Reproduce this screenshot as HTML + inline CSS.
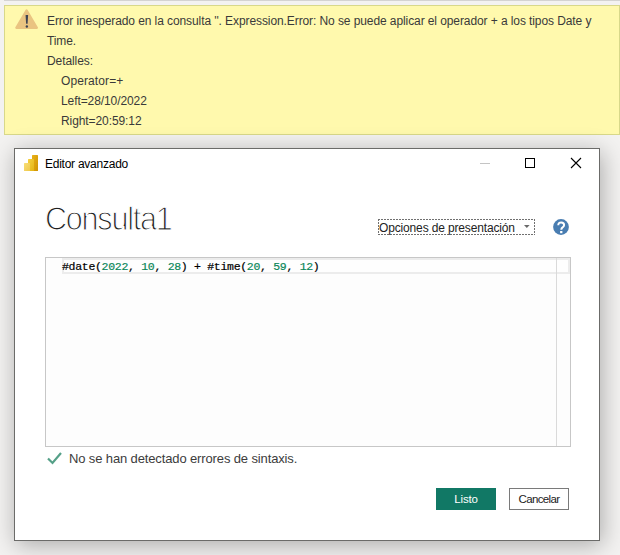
<!DOCTYPE html>
<html><head><meta charset="utf-8">
<style>
*{margin:0;padding:0;box-sizing:border-box}
html,body{width:620px;height:555px;overflow:hidden;background:#f3f2f1;font-family:"Liberation Sans",sans-serif;position:relative}
.abs{position:absolute}
.topline{left:4px;top:0;width:616px;height:1px;background:#d4d3d1}
.warn{left:4px;top:5px;width:616px;height:130px;background:#fff9ad;border:1px solid #d8d88a}
.wt{position:absolute;font-size:12px;color:#3a3a3a;white-space:nowrap;line-height:20px;letter-spacing:-0.09px}
.dlg{left:14px;top:148px;width:586px;height:393px;background:#fff;border:1px solid #6b6b69;box-shadow:2px 4px 22px rgba(0,0,0,.30)}
.t12{position:absolute;font-size:12px;white-space:nowrap;line-height:16px}
.code{position:absolute;font-family:"Liberation Mono",monospace;font-size:11.5px;letter-spacing:-0.3px;white-space:pre;line-height:16px;color:#000;-webkit-text-stroke:0.2px currentColor}
.n{color:#098658}
</style></head><body>
<div class="abs topline"></div>
<div class="abs warn"></div>
<svg class="abs" style="left:12px;top:8px" width="30" height="24" viewBox="0 0 30 24">
  <path d="M14.6 2.4 L24.9 19.8 L4.3 19.8 Z" fill="#eac481" stroke="#eac481" stroke-width="2.2" stroke-linejoin="round"/>
  <path d="M13.6 7 L16.1 7 L15.6 15.7 L14.1 15.7 Z" fill="#3d4250"/>
  <circle cx="14.85" cy="18.5" r="1.2" fill="#3d4250"/>
</svg>
<div class="wt" style="left:47px;top:11px">Error inesperado en la consulta ''. Expression.Error: No se puede aplicar el operador + a los tipos Date y</div>
<div class="wt" style="left:47px;top:31px">Time.</div>
<div class="wt" style="left:47px;top:51px">Detalles:</div>
<div class="wt" style="left:61px;top:71px;letter-spacing:0.1px">Operator=+</div>
<div class="wt" style="left:61px;top:91px">Left=28/10/2022</div>
<div class="wt" style="left:61px;top:111px">Right=20:59:12</div>

<div class="abs dlg"></div>
<!-- power bi icon -->
<svg class="abs" style="left:24px;top:155px" width="15" height="16" viewBox="0 0 15 16">
  <defs>
    <linearGradient id="g1" x1="0" y1="0" x2="1" y2="1"><stop offset="0" stop-color="#e9b21a"/><stop offset="1" stop-color="#d09300"/></linearGradient>
    <linearGradient id="g2" x1="0" y1="0" x2="1" y2="1"><stop offset="0" stop-color="#f4d03f"/><stop offset="1" stop-color="#e5b514"/></linearGradient>
    <linearGradient id="g3" x1="0" y1="0" x2="1" y2="1"><stop offset="0" stop-color="#f8de78"/><stop offset="1" stop-color="#efc94a"/></linearGradient>
  </defs>
  <rect x="8" y="0" width="6" height="16" rx="0.5" fill="url(#g1)"/>
  <rect x="4" y="4" width="6" height="12" rx="0.5" fill="url(#g2)"/>
  <rect x="0" y="8" width="6" height="8" rx="0.5" fill="url(#g3)"/>
</svg>
<div class="t12" style="left:45px;top:156px;color:#000;letter-spacing:-0.25px">Editor avanzado</div>
<!-- window buttons -->
<div class="abs" style="left:480px;top:163px;width:10px;height:1px;background:#c4c4c4"></div>
<div class="abs" style="left:525px;top:158px;width:10px;height:10px;border:1px solid #000"></div>
<svg class="abs" style="left:570px;top:157px" width="12" height="12" viewBox="0 0 12 12">
  <path d="M1 1 L11 11 M11 1 L1 11" stroke="#000" stroke-width="1.1"/>
</svg>

<div class="abs" style="left:45px;top:198px;font-size:34px;line-height:40px;color:#202020;white-space:nowrap;letter-spacing:-1.4px;-webkit-text-stroke:1.25px #fff;transform:scaleX(0.9);transform-origin:0 0">Consulta1</div>

<!-- dropdown -->
<svg class="abs" style="left:378px;top:219px" width="157" height="16" viewBox="0 0 157 16" shape-rendering="crispEdges">
  <path d="M0 0.5 H157 M0 15.5 H157" stroke="#707070" stroke-width="1" stroke-dasharray="2 1"/>
  <path d="M0.5 0 V16 M156.5 0 V16" stroke="#707070" stroke-width="1" stroke-dasharray="2 1"/>
</svg>
<div class="t12" style="left:379px;top:220px;color:#222;letter-spacing:-0.15px">Opciones de presentación</div>
<svg class="abs" style="left:524px;top:225px" width="6" height="3" viewBox="0 0 6 3"><path d="M0 0 L5.6 0 L2.8 3 Z" fill="#6a6a6a"/></svg>
<!-- help -->
<svg class="abs" style="left:552px;top:218px" width="18" height="18" viewBox="0 0 18 18">
  <circle cx="9" cy="9" r="7.9" fill="#497db1"/>
  <path d="M6.3 7.2 Q6.2 4.4 9.2 4.4 Q12.1 4.4 12.1 7 Q12.1 8.5 10.6 9.4 Q9.3 10.2 9.3 11.8" stroke="#fff" stroke-width="2" fill="none"/>
  <rect x="8.1" y="13" width="2.3" height="2.2" fill="#fff"/>
</svg>

<!-- editor -->
<div class="abs" style="left:45px;top:257px;width:526px;height:190px;border:1px solid #c7c7c7;background:#fdfdfd"></div>
<div class="abs" style="left:62px;top:258px;width:508px;height:16px;border:2px solid #ececec;background:#fefefe"></div>
<div class="abs" style="left:556px;top:258px;width:1px;height:188px;background:#dadada"></div>
<div class="code" style="left:62px;top:259px">#date(<span class="n">2022</span>, <span class="n">10</span>, <span class="n">28</span>) + #time(<span class="n">20</span>, <span class="n">59</span>, <span class="n">12</span>)</div>

<!-- status -->
<svg class="abs" style="left:46px;top:451px" width="17" height="15" viewBox="0 0 17 15">
  <path d="M2 7.5 L6.5 12 L15 2" stroke="#55a088" stroke-width="2.2" fill="none"/>
</svg>
<div class="abs" style="left:69px;top:451px;font-size:13px;line-height:16px;color:#3c3c3c;white-space:nowrap;letter-spacing:-0.13px">No se han detectado errores de sintaxis.</div>

<!-- buttons -->
<div class="abs" style="left:436px;top:488px;width:60px;height:22px;background:#117865"></div>
<div class="t12" style="left:436px;top:491px;width:60px;text-align:center;color:#fff;font-size:11.5px;letter-spacing:-0.2px">Listo</div>
<div class="abs" style="left:509px;top:488px;width:60px;height:22px;border:1px solid #7a7a7a;background:#fff"></div>
<div class="t12" style="left:509px;top:491px;width:60px;text-align:center;color:#222;font-size:11.5px;letter-spacing:-0.65px">Cancelar</div>
</body></html>
